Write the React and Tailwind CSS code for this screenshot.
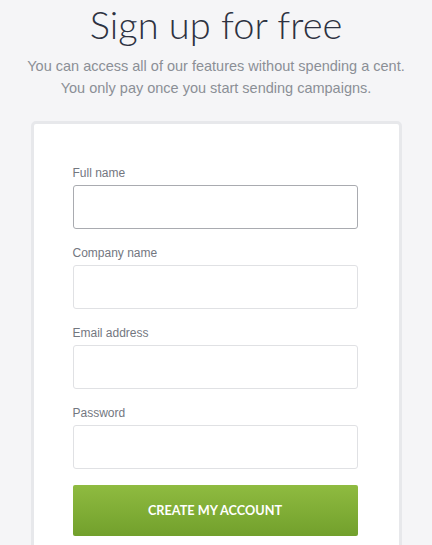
export default function App() {
  const fields = [
    { label: 'Full name', type: 'text', active: true },
    { label: 'Company name', type: 'text' },
    { label: 'Email address', type: 'email' },
    { label: 'Password', type: 'password' },
  ];

  return (
    <div className="min-h-screen bg-[#f5f5f7] font-['Liberation_Sans',Arial,sans-serif]">
      <div className="text-center pt-[1px]">
        <h1 className="font-['Lato',sans-serif] font-light text-[38px] leading-[46px] text-[#2d3241]">
          Sign up for free
        </h1>
        <p className="mt-[8px] text-[14.5px] leading-[22px] text-[#8b8f96]">
          You can access all of our features without spending a cent.
          <br />
          You only pay once you start sending campaigns.
        </p>
      </div>

      <div className="mx-auto mt-[22px] w-[371px] rounded-[5px] border-[3px] border-[#e7e8eb] bg-white pl-[39px] pr-[41px] pt-[41px] pb-[40px]">
        {fields.map((f) => (
          <div key={f.label} className="mb-[16px]">
            <label className="block text-[12px] leading-[16px] text-[#73777f] mb-[4px]">
              {f.label}
            </label>
            <input
              type={f.type}
              className={
                'block w-full h-[44px] rounded-[3px] border bg-white px-3 outline-none ' +
                (f.active ? 'border-[#a9abb0]' : 'border-[#e0e1e4]')
              }
            />
          </div>
        ))}
        <button className="mt-[1px] block w-full h-[51px] rounded-[2px] bg-gradient-to-b from-[#8fbb40] to-[#72a02c] font-['Lato',sans-serif] font-bold text-[12.7px] text-white">
          CREATE MY ACCOUNT
        </button>
      </div>
    </div>
  );
}
